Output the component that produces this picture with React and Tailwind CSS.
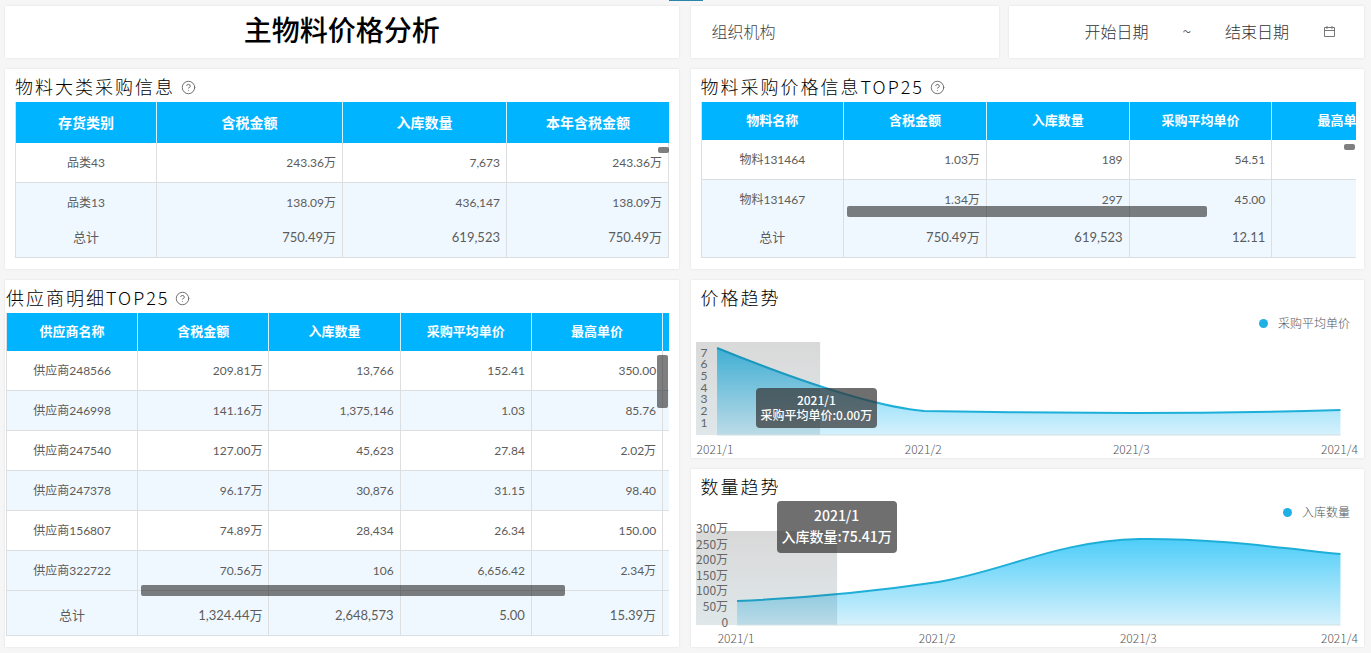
import { CircleHelp } from "lucide-react";

const categoryRows = [
    ["品类43", "243.36万", "7,673", "243.36万"],
    ["品类13", "138.09万", "436,147", "138.09万"],
];

const materialRows = [
    ["物料131464", "1.03万", "189", "54.51", ""],
    ["物料131467", "1.34万", "297", "45.00", ""],
];

const supplierRows = [
    ["供应商248566", "209.81万", "13,766", "152.41", "350.00", ""],
    ["供应商246998", "141.16万", "1,375,146", "1.03", "85.76", ""],
    ["供应商247540", "127.00万", "45,623", "27.84", "2.02万", ""],
    ["供应商247378", "96.17万", "30,876", "31.15", "98.40", ""],
    ["供应商156807", "74.89万", "28,434", "26.34", "150.00", ""],
    ["供应商322722", "70.56万", "106", "6,656.42", "2.34万", ""],
];

function Card({ className = "", children }) {
    return (
        <section className={`relative bg-white shadow-[0_0_2px_#dcdcdc] ${className}`}>
            {children}
        </section>
    );
}

function Title({ help, className = "", children }) {
    return (
        <div className={`flex h-[33px] items-center gap-1.5 ${className}`}>
            <h2 className="text-lg leading-7 font-light tracking-[2px] whitespace-nowrap text-black">
                {children}
            </h2>
            {help && (
                <button type="button" aria-label="说明" className="pt-1 text-[#666]">
                    <CircleHelp size={15} strokeWidth={1.5} />
                </button>
            )}
        </div>
    );
}

function DataTable({ cols, head, rows, total, width, headClass, totalClass, lastLine }) {
    const line = "border-r border-[#dcdfe2]";
    return (
        <table
            className={`table-fixed border-separate border-spacing-0 border-l border-[#dcdfe2] font-['Lato','Noto_Sans_CJK_SC',sans-serif] text-[#5c5c5c] ${width}`}
        >
            <colgroup>
                {cols.map((c, i) => (
                    <col key={i} className={c} />
                ))}
            </colgroup>
            <thead>
                <tr className={`bg-[#00b4ff] text-white ${headClass}`}>
                    {head.map((h, i) => (
                        <th
                            key={i}
                            scope="col"
                            className="border-r border-[#d5f2ff] p-0 text-center font-bold whitespace-nowrap last:border-r-0"
                        >
                            {h}
                        </th>
                    ))}
                </tr>
            </thead>
            <tbody>
                {rows.map((row, r) => (
                    <tr key={row[0]} className="h-10 text-xs even:bg-[#f0f8ff]">
                        {row.map((cell, i) => (
                            <td
                                key={i}
                                className={`p-0 ${line} ${i === 0 ? "text-center" : "pr-1.5 text-right"} ${
                                    r < rows.length - 1 || lastLine ? "border-b" : ""
                                }`}
                            >
                                {cell}
                            </td>
                        ))}
                    </tr>
                ))}
            </tbody>
            <tfoot>
                <tr className={`bg-[#f0f8ff] text-[13px] ${totalClass}`}>
                    {total.map((cell, i) => (
                        <td
                            key={i}
                            className={`border-b p-0 ${line} ${
                                i === 0 ? "text-center" : "pr-1.5 text-right"
                            }`}
                        >
                            {cell}
                        </td>
                    ))}
                </tr>
            </tfoot>
        </table>
    );
}

function Legend({ children }) {
    return (
        <div className="flex h-5 items-center justify-end gap-2.5 pr-3.5 text-xs font-light text-[#555]">
            <span className="size-[9px] rounded-full bg-[#1fb0e6]"></span>
            {children}
        </div>
    );
}

function AreaChart({ id, label, line, left, base, ticks, tickX, tickAnchor, tickClass, dates, band }) {
    return (
        <svg viewBox="0 0 673 125" className="block w-full overflow-visible" role="img" aria-label={label}>
            <defs>
                <linearGradient id={id} x1="0" x2="0" y1="12" y2={base} gradientUnits="userSpaceOnUse">
                    <stop offset="0" stopColor="#46cbf8" />
                    <stop offset="1" stopColor="#d6f1fc" />
                </linearGradient>
                <linearGradient id={`${id}-band`} x1="0" x2="0" y1="0" y2="1">
                    <stop offset="0" stopColor="#000000" stopOpacity="0.15" />
                    <stop offset="1" stopColor="#2a5f70" stopOpacity="0.15" />
                </linearGradient>
            </defs>
            <path d={`${line} V${base} H${left} Z`} fill={`url(#${id})`} />
            <path d={line} fill="none" stroke="#1eafd9" strokeWidth="2" />
            <rect x="5" y={band.y} width={band.width} height={base - band.y} fill={`url(#${id}-band)`} />
            <line x1={left} x2="649" y1={base} y2={base} stroke="#cfdfe3" />
            <g fill="#666" textAnchor={tickAnchor} className={tickClass}>
                {ticks.map(([text, y]) => (
                    <text key={text} x={tickX} y={y}>
                        {text}
                    </text>
                ))}
            </g>
            <g fontSize="12" fill="#555" textAnchor="middle" className="font-light">
                {dates.map(([text, x]) => (
                    <text key={text} x={x} y="121">
                        {text}
                    </text>
                ))}
            </g>
        </svg>
    );
}

export default function App() {
    return (
        <main className="relative grid min-h-screen grid-cols-2 items-start gap-3 bg-[#f6f6f6] pt-1.5 pr-[7px] pb-1.5 pl-[5px] font-['Noto_Sans_CJK_SC',sans-serif]">
            <div className="absolute top-0 left-1/2 h-px w-[34px] -translate-x-1/2 bg-[#2a86a8]"></div>

            <div className="flex min-w-0 flex-col gap-[11px]">
                <Card className="flex h-[52px] items-center justify-center pb-1.5">
                    <h1 className="text-[28px] leading-10 font-medium text-black">主物料价格分析</h1>
                </Card>

                <Card className="px-2.5 pb-[11px]">
                    <Title help>物料大类采购信息</Title>
                    <div className="relative">
                        <DataTable
                            width="w-full"
                            cols={["w-[141px]", "w-[186px]", "w-[164px]", "w-[162px]"]}
                            head={["存货类别", "含税金额", "入库数量", "本年含税金额"]}
                            rows={categoryRows}
                            total={["总计", "750.49万", "619,523", "750.49万"]}
                            headClass="h-[41px] text-sm"
                            totalClass="h-[35px] align-top leading-7"
                        />
                        <div className="absolute top-[45px] right-0 h-1.5 w-[11px] rounded-xs bg-black/50"></div>
                    </div>
                </Card>

                <Card className="pr-2.5 pb-[11px] pl-px">
                    <Title help>供应商明细TOP25</Title>
                    <div className="relative overflow-hidden">
                        <DataTable
                            width="w-[119%]"
                            cols={["w-1/6", "w-1/6", "w-1/6", "w-1/6", "w-1/6", "w-1/6"]}
                            head={["供应商名称", "含税金额", "入库数量", "采购平均单价", "最高单价", ""]}
                            rows={supplierRows}
                            total={["总计", "1,324.44万", "2,648,573", "5.00", "15.39万", ""]}
                            headClass="h-[38px] text-[13px]"
                            totalClass="h-[45px] align-bottom leading-10"
                            lastLine
                        />
                        <div className="absolute top-[42px] right-px h-[53px] w-[11px] rounded-xs bg-black/50"></div>
                        <div className="absolute top-[272px] left-[20%] ml-0.5 h-[11px] w-[64%] rounded-xs bg-black/50"></div>
                    </div>
                </Card>
            </div>

            <div className="flex min-w-0 flex-col gap-[11px]">
                <div className="grid grid-cols-[13fr_15fr] gap-2.5">
                    <Card className="flex h-[52px] items-center px-[21px] pb-0.5">
                        <input
                            type="text"
                            aria-label="组织机构"
                            placeholder="组织机构"
                            className="w-full bg-transparent text-base font-light outline-none placeholder:text-[#444]"
                        />
                    </Card>
                    <Card className="flex h-[52px] items-center justify-end gap-[33px] pr-7 pb-0.5 font-light text-[#333]">
                        <input
                            type="text"
                            aria-label="开始日期"
                            placeholder="开始日期"
                            className="w-[66px] bg-transparent text-center text-base outline-none placeholder:text-[#333]"
                        />
                        <span>~</span>
                        <input
                            type="text"
                            aria-label="结束日期"
                            placeholder="结束日期"
                            className="w-[66px] bg-transparent text-center text-base outline-none placeholder:text-[#333]"
                        />
                        <button type="button" aria-label="选择日期">
                            <svg width="13" height="13" viewBox="0 0 13 13" fill="none" stroke="#777">
                                <path d="M1.5 2.5h10v9h-10zM1.5 5.5h10M4 1v3M9 1v3" />
                            </svg>
                        </button>
                    </Card>
                </div>

                <Card className="pr-2 pb-[11px] pl-2.5">
                    <Title help>物料采购价格信息TOP25</Title>
                    <div className="relative overflow-hidden">
                        <DataTable
                            width="w-[109%]"
                            cols={["w-1/5", "w-1/5", "w-1/5", "w-1/5", "w-1/5"]}
                            head={["物料名称", "含税金额", "入库数量", "采购平均单价", "最高单价"]}
                            rows={materialRows}
                            total={["总计", "750.49万", "619,523", "12.11", ""]}
                            headClass="h-[38px] text-[13px]"
                            totalClass="h-[38px] align-top leading-[34px]"
                        />
                        <div className="absolute top-[42px] right-px h-1.5 w-[11px] rounded-xs bg-black/50"></div>
                        <div className="absolute top-[104px] left-[22%] ml-0.5 h-[11px] w-[55%] rounded-xs bg-black/50"></div>
                    </div>
                </Card>

                <Card>
                    <Title className="pl-2.5">价格趋势</Title>
                    <Legend>采购平均单价</Legend>
                    <AreaChart
                        id="price"
                        label="价格趋势"
                        line="M26 15 C90 41 176 73 233 78 C300 79 380 80 441 80 S580 79 649 77"
                        left={26}
                        base={102}
                        tickX={13}
                        tickAnchor="middle"
                        tickClass="font-['Lato',sans-serif] text-[12px]"
                        ticks={[
                            ["7", 24],
                            ["6", 35],
                            ["5", 47],
                            ["4", 59],
                            ["3", 70],
                            ["2", 82],
                            ["1", 94],
                        ]}
                        dates={[
                            ["2021/1", 24],
                            ["2021/2", 232],
                            ["2021/3", 440],
                            ["2021/4", 648],
                        ]}
                        band={{ y: 9, width: 124 }}
                    />
                    <div className="absolute top-[108px] left-[65px] rounded bg-[#323232]/70 px-[5px] pt-1 pb-1.5 text-center text-xs leading-[15px] font-medium whitespace-nowrap text-white">
                        2021/1
                        <br />
                        采购平均单价:0.00万
                    </div>
                </Card>

                <Card>
                    <Title className="pl-2.5">数量趋势</Title>
                    <Legend>入库数量</Legend>
                    <AreaChart
                        id="quantity"
                        label="数量趋势"
                        line="M46 79 C113 76 180 70 247 60 C314 49 365 19 448 17 C515 16 582 25 649 32"
                        left={46}
                        base={103}
                        tickX={37}
                        tickAnchor="end"
                        tickClass="text-[12px]"
                        ticks={[
                            ["300万", 11],
                            ["250万", 27],
                            ["200万", 42],
                            ["150万", 58],
                            ["100万", 73],
                            ["50万", 89],
                            ["0", 105],
                        ]}
                        dates={[
                            ["2021/1", 45],
                            ["2021/2", 246],
                            ["2021/3", 447],
                            ["2021/4", 648],
                        ]}
                        band={{ y: 9, width: 141 }}
                    />
                    <div className="absolute top-8 left-[86px] rounded bg-[#323232]/70 px-[5px] pt-1 pb-1.5 text-center text-sm leading-[21px] font-medium whitespace-nowrap text-white">
                        2021/1
                        <br />
                        入库数量:75.41万
                    </div>
                </Card>
            </div>
        </main>
    );
}
